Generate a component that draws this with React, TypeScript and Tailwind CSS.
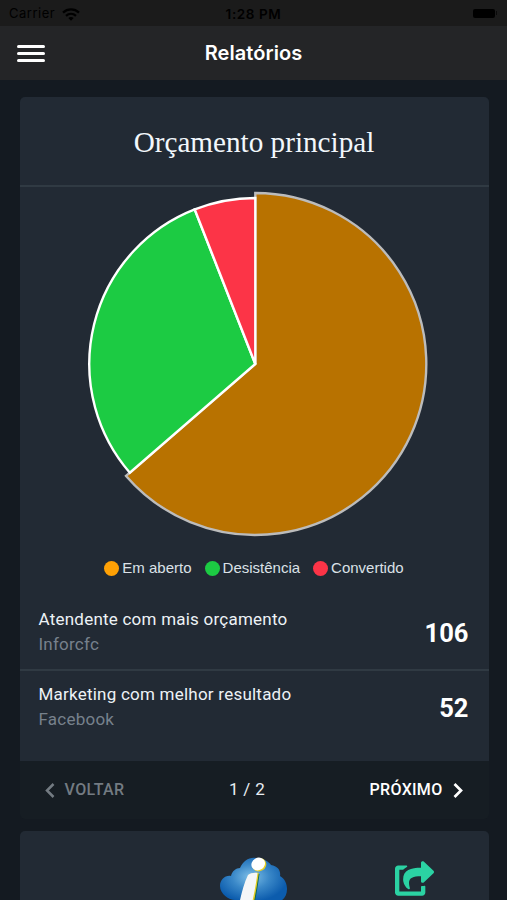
import { FaShareSquare } from 'react-icons/fa';

const slices = [
  { label: 'Em aberto', from: 0, to: 229.1, radius: 171, fill: '#b87200', stroke: '#bcbcbc', dot: 'bg-[#ffa105]' },
  { label: 'Desistência', from: 229.1, to: 338.6, radius: 166, fill: '#1ccb43', stroke: '#ffffff', dot: 'bg-[#1ccb43]' },
  { label: 'Convertido', from: 338.6, to: 360, radius: 166, fill: '#fc3447', stroke: '#ffffff', dot: 'bg-[#fc3447]' },
];

const rows = [
  { title: 'Atendente com mais orçamento', name: 'Inforcfc', value: 106 },
  { title: 'Marketing com melhor resultado', name: 'Facebook', value: 52 },
];

const point = (deg: number, r: number) => {
  const a = (deg * Math.PI) / 180;
  return `${(Math.sin(a) * r).toFixed(2)} ${(-Math.cos(a) * r).toFixed(2)}`;
};

const slicePath = (from: number, to: number, r: number) =>
  `M0 0L${point(from, r)}A${r} ${r} 0 ${to - from > 180 ? 1 : 0} 1 ${point(to, r)}Z`;

function StatusBar() {
  return (
    <div className="grid h-[26px] grid-cols-3 items-center bg-[#1b1b1b] px-[9px] font-['Inter',sans-serif] text-[13px] text-black">
      <div className="flex items-center gap-[7px] pt-[2px]">
        <span className="tracking-[0.5px]">Carrier</span>
        <svg width="18" height="13" viewBox="0 0 18 13" fill="none" stroke="currentColor" strokeWidth="2.3">
          <path d="M1 4.6C5.6.4 12.4.4 17 4.6" />
          <path d="M4 7.8c2.9-2.6 7.1-2.6 10 0" />
          <path d="M9 12.8 6.3 10c1.6-1.4 3.8-1.4 5.4 0Z" fill="currentColor" stroke="none" />
        </svg>
      </div>
      <div className="pt-[2px] text-center text-[13.5px] font-semibold tracking-[0.6px]">1:28 PM</div>
      <div className="flex items-center justify-end gap-px pr-px">
        <span className="h-[9px] w-[22px] rounded-[2px] bg-black" />
        <span className="h-1 w-px bg-black/60" />
      </div>
    </div>
  );
}

function Header() {
  return (
    <header className="grid h-[54px] grid-cols-[1fr_auto_1fr] items-center bg-[#242527] px-[17px]">
      <button className="flex w-[28px] flex-col gap-1">
        <span className="h-[3px] rounded-full bg-white" />
        <span className="h-[3px] rounded-full bg-white" />
        <span className="h-[3px] rounded-full bg-white" />
      </button>
      <h1 className="font-['Inter',sans-serif] text-[20px] font-semibold tracking-[0.05px] text-white">Relatórios</h1>
    </header>
  );
}

function PieChart() {
  return (
    <svg className="ml-[65px] block" width="346" height="346" viewBox="-170.3 -173 346 346">
      {slices.map(s => (
        <path key={s.label} d={slicePath(s.from, s.to, s.radius)} fill={s.fill} stroke={s.stroke} strokeWidth="2.4" />
      ))}
    </svg>
  );
}

function CloudLogo() {
  return (
    <svg width="68" height="56" viewBox="0 0 68 56">
      <defs>
        <radialGradient id="cloud" cx="0.46" cy="0.42" r="0.55">
          <stop offset="0" stopColor="#7fc0e8" />
          <stop offset="0.5" stopColor="#3a88c8" />
          <stop offset="1" stopColor="#0c5cad" />
        </radialGradient>
      </defs>
      <path d="M15 43C9 43 0 37 0 29c0-6 5-11 11-10 1-5 5-8 9-8C23 4 29 0 36 1c8 0 13 4 15 7 7 1 10 6 9 11 5 3 7 8 7 13 0 8-5 13-12 14H20c-3 0-4-1-5-3Z" fill="url(#cloud)" />
      <ellipse cx="39.3" cy="7.8" rx="7.2" ry="6.4" fill="#e6cf24" transform="rotate(-30 39.3 7.8)" />
      <ellipse cx="38.2" cy="7" rx="7" ry="6.2" fill="#fff" transform="rotate(-30 38.2 7)" />
      <path d="M29 19c3-2 7-2.500 10.500-2-2 14-4 27-7 39H19c3-12 5-27 10-37Z" fill="#13694e" />
      <path d="M28.500 18c3-2 7-2.500 10.300-2-2 14-4.300 27-7.300 40H18c3-12 5-27 10.500-38Z" fill="#e6cf24" />
      <path d="M28 18c2.500-2 6-2.500 9.500-2-2 14-4.500 27-8 40H17c3-12 5.500-27 11-38Z" fill="#f4f6f8" />
    </svg>
  );
}

export default function App() {
  return (
    <div className="h-[900px] w-full overflow-hidden bg-[#141a21] font-['Roboto',sans-serif]">
      <StatusBar />
      <Header />
      <main className="flex flex-col gap-3 pr-[18.5px] pl-[19.5px] pt-[17px]">
        <section className="rounded-[5px] bg-[#161d23]">
          <div className="h-[664px] rounded-t-[5px] bg-[#222a34]">
            <h2 className="flex h-[90px] items-center justify-center border-b-2 border-[#303a43] pt-[3px] font-['Liberation_Serif',serif] text-[29.2px] text-[#f2f7fc]">
              Orçamento principal
            </h2>
            <div className="h-[409px] pt-1">
              <PieChart />
              <div className="mt-[21px] flex justify-center gap-[13px] font-['Liberation_Sans',sans-serif] text-[15px] leading-5 text-[#dbe1e7]">
                {slices.map(s => (
                  <div key={s.label} className="flex items-center gap-[3px]">
                    <span className={`size-[15px] rounded-full ${s.dot}`} />
                    {s.label}
                  </div>
                ))}
              </div>
            </div>
            {rows.map(r => (
              <div key={r.name} className="flex h-[75px] items-center justify-between border-[#303a43] pr-[20px] pl-[19px] not-last:border-b-2 last:h-[73px]">
                <div className="pb-[2px] text-[17px] leading-[25px] tracking-[0.23px]">
                  <p className="text-[#edf2f6]">{r.title}</p>
                  <p className="text-[#77818c]">{r.name}</p>
                </div>
                <span className="pt-px text-[25.5px] font-bold text-white">{r.value}</span>
              </div>
            ))}
          </div>
          <div className="grid h-[58px] grid-cols-[1fr_auto_1fr] items-center pr-[20px] pl-[6px] text-[16px]">
            <button className="flex items-center gap-[10px] pl-[19px] font-medium tracking-[0.4px] text-[#737b82]">
              <svg width="10" height="15" viewBox="0 0 10 15" fill="none" stroke="currentColor" strokeWidth="2.5">
                <path d="M8.5 1 2 7.5 8.5 14" />
              </svg>
              VOLTAR
            </button>
            <span className="text-center text-[17px] tracking-[0.3px] text-[#e8edf2]">1 / 2</span>
            <button className="flex items-center justify-end gap-[10px] pr-[6px] font-medium tracking-[0.3px] text-white">
              PRÓXIMO
              <svg width="10" height="15" viewBox="0 0 10 15" fill="none" stroke="currentColor" strokeWidth="2.7">
                <path d="M1.5 1 8 7.5 1.5 14" />
              </svg>
            </button>
          </div>
        </section>
        <section className="grid h-[120px] grid-cols-3 items-start rounded-[5px] bg-[#222a34] pt-[26px]">
          <div className="col-start-2 flex justify-center">
            <CloudLogo />
          </div>
          <FaShareSquare className="mt-[4px] ml-[63px] h-[35px] w-[39px] text-[#2bd2a3]" />
        </section>
      </main>
    </div>
  );
}
